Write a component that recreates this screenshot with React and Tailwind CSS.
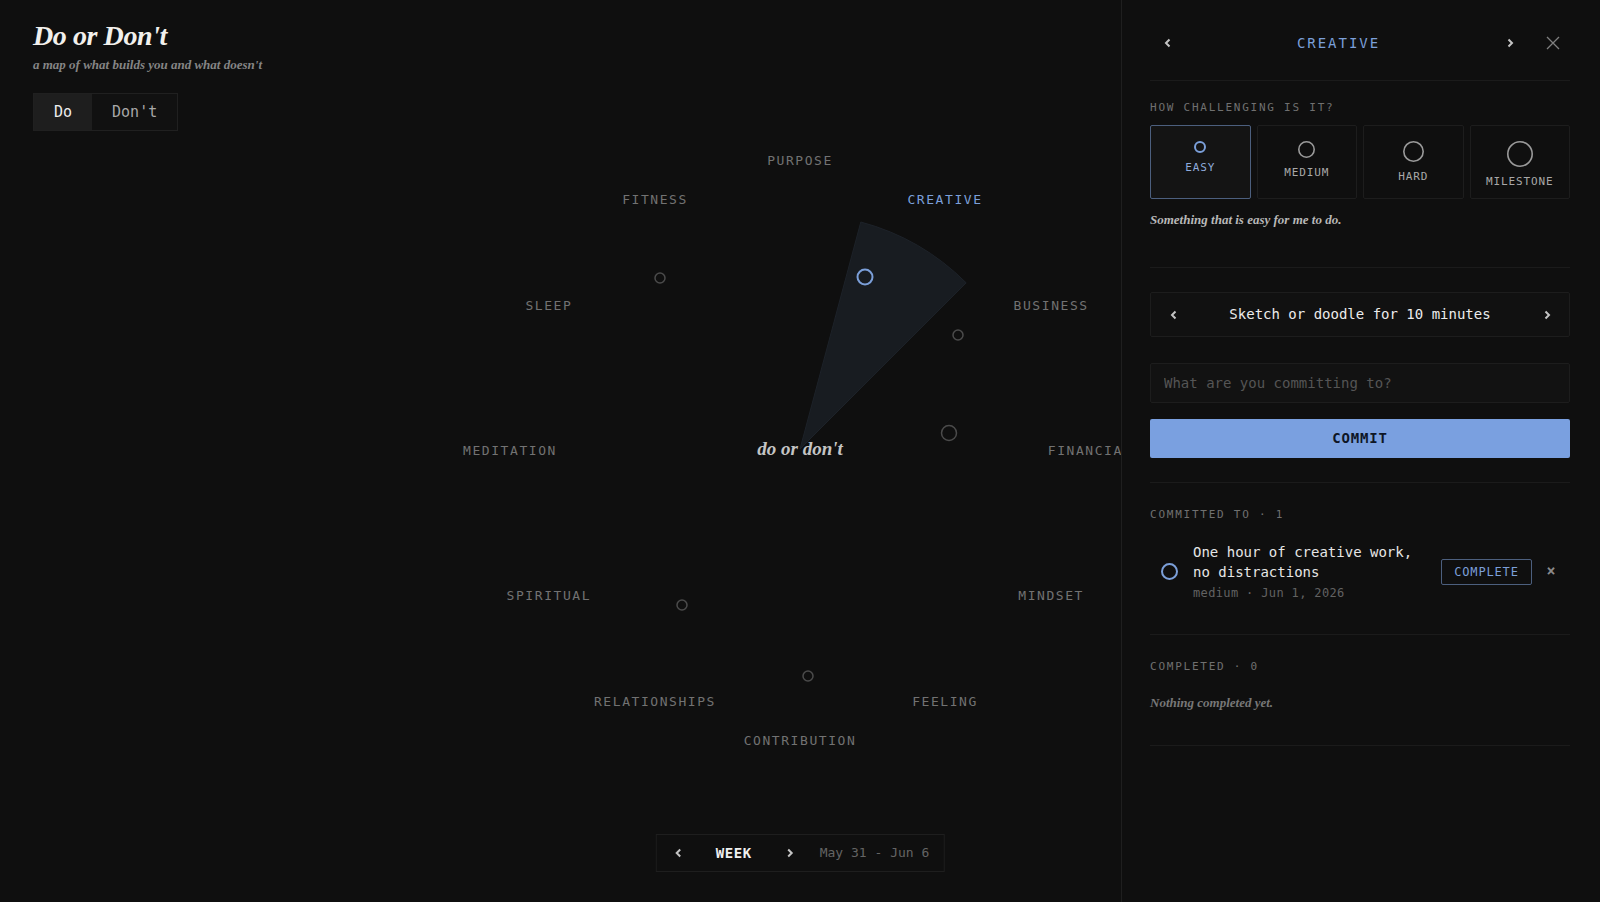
import React, { useState } from "react";

const MONO = "font-['DejaVu_Sans_Mono',monospace]";
const SERIF = "font-['Liberation_Serif',serif]";

const AREAS = [
  "PURPOSE",
  "CREATIVE",
  "BUSINESS",
  "FINANCIAL",
  "MINDSET",
  "FEELING",
  "CONTRIBUTION",
  "RELATIONSHIPS",
  "SPIRITUAL",
  "MEDITATION",
  "SLEEP",
  "FITNESS",
];

// commitment dots, offsets from wheel center
const DOTS = [
  { x: -140, y: -171, r: 5, active: false },
  { x: 65, y: -172, r: 7.5, active: true },
  { x: 158, y: -114, r: 5, active: false },
  { x: 149, y: -16, r: 7.5, active: false },
  { x: -118, y: 156, r: 5, active: false },
  { x: 8, y: 227, r: 5, active: false },
];

const LEVELS = [
  { name: "EASY", size: 12 },
  { name: "MEDIUM", size: 17 },
  { name: "HARD", size: 21 },
  { name: "MILESTONE", size: 26 },
];

function Ring({ size, color, stroke = 1.5 }) {
  const r = (size - stroke) / 2;
  return (
    <svg width={size} height={size} viewBox={`0 0 ${size} ${size}`}>
      <circle cx={size / 2} cy={size / 2} r={r} fill="none" stroke={color} strokeWidth={stroke} />
    </svg>
  );
}

function Chevron({ dir = "left" }) {
  return (
    <svg width="7" height="10" viewBox="0 0 7 10">
      <path
        d={dir === "left" ? "M5.5 1.5 L2 5 L5.5 8.5" : "M1.5 1.5 L5 5 L1.5 8.5"}
        fill="none"
        stroke="#c4c4c4"
        strokeWidth="2"
      />
    </svg>
  );
}

function Wheel({ selected }) {
  const C = 320;
  const R = 290;
  const W = 235;
  const rad = (d) => (d * Math.PI) / 180;
  const a0 = rad(-75);
  const a1 = rad(-45);
  const wedge = `M ${C} ${C} L ${C + W * Math.cos(a0)} ${C + W * Math.sin(a0)} A ${W} ${W} 0 0 1 ${C + W * Math.cos(a1)} ${C + W * Math.sin(a1)} Z`;

  return (
    <div className="absolute left-1/2 top-[449px] h-[640px] w-[640px] -translate-x-1/2 -translate-y-1/2">
      <svg width="640" height="640" viewBox="0 0 640 640" className="absolute inset-0">
        <path d={wedge} fill="#181c21" stroke="#1d2229" strokeWidth="1" />
        {DOTS.map((d, i) => (
          <circle
            key={i}
            cx={C + d.x}
            cy={C + d.y}
            r={d.r}
            fill="none"
            stroke={d.active ? "#7b9fd9" : "#4b4b4b"}
            strokeWidth={d.active ? 2 : 1.5}
          />
        ))}
      </svg>
      {AREAS.map((name, i) => {
        const a = rad(-90 + i * 30);
        return (
          <span
            key={name}
            className={`absolute -translate-x-1/2 -translate-y-1/2 whitespace-nowrap text-[13px] tracking-[0.12em] ${MONO} ${
              name === selected ? "text-[#7b9fd9]" : "text-[#727272]"
            }`}
            style={{ left: C + R * Math.cos(a), top: C + 2 + R * Math.sin(a) }}
          >
            {name}
          </span>
        );
      })}
      <span
        className={`absolute left-1/2 top-1/2 -translate-x-1/2 -translate-y-1/2 whitespace-nowrap text-[19px] font-bold italic text-[#c4c4c4] ${SERIF}`}
      >
        do or don't
      </span>
    </div>
  );
}

function SectionLabel({ children }) {
  return <div className={`text-[11px] leading-[14px] tracking-[0.16em] text-[#707070] ${MONO}`}>{children}</div>;
}

function Sidebar({ area }) {
  const [level, setLevel] = useState("EASY");
  const [text, setText] = useState("");

  return (
    <aside className={`absolute right-0 top-0 z-10 flex h-full w-[479px] flex-col border-l border-[#1f1f1f] bg-[#0f0f0f] pl-[28px] pr-[30px] ${MONO}`}>
      {/* header */}
      <div className="flex h-[81px] items-center border-b border-[#1b1b1b] pt-[6px]">
        <div className="flex flex-1 items-center">
          <button className="flex h-[34px] w-[34px] items-center justify-center">
            <Chevron dir="left" />
          </button>
          <div className="flex-1 text-center text-[14px] tracking-[0.14em] text-[#7b9fd9]">{area}</div>
          <button className="flex h-[34px] w-[34px] items-center justify-center">
            <Chevron dir="right" />
          </button>
        </div>
        <button className="ml-[9px] flex h-[34px] w-[34px] items-center justify-center">
          <svg width="14" height="14" viewBox="0 0 14 14">
            <path d="M1 1 L13 13 M13 1 L1 13" stroke="#808080" strokeWidth="1.3" />
          </svg>
        </button>
      </div>

      {/* difficulty */}
      <div className="border-b border-[#1b1b1b] pb-[38px] pt-[20px]">
        <SectionLabel>HOW CHALLENGING IS IT?</SectionLabel>
        <div className="mt-[10px] grid grid-cols-4 gap-[6px]">
          {LEVELS.map((l) => {
            const on = l.name === level;
            return (
              <button
                key={l.name}
                onClick={() => setLevel(l.name)}
                className={`flex h-[74px] flex-col items-center gap-2 rounded-[2px] border pt-[15px] ${
                  on ? "border-[#4c5f7e] bg-[#141414]" : "border-[#1d1d1d] bg-[#0f0f0f]"
                }`}
              >
                <Ring size={l.size} color={on ? "#7b9fd9" : "#9a9a9a"} stroke={on ? 2 : 1.6} />
                <span className={`text-[11px] leading-[14px] tracking-[0.08em] ${on ? "text-[#8fabdc]" : "text-[#a8a8a8]"}`}>
                  {l.name}
                </span>
              </button>
            );
          })}
        </div>
        <div className={`mt-[12px] text-[13px] font-bold italic leading-[18px] text-[#b8b8b8] ${SERIF}`}>
          Something that is easy for me to do.
        </div>
      </div>

      {/* suggestion + input */}
      <div className="border-b border-[#1b1b1b] pb-[24px] pt-[24px]">
        <div className="flex h-[45px] items-center rounded-[2px] border border-[#1d1d1d] bg-[#111111] px-[14px]">
          <button className="flex w-4 justify-center">
            <Chevron dir="left" />
          </button>
          <div className="flex-1 text-center text-[14px] text-[#ececec]">Sketch or doodle for 10 minutes</div>
          <button className="flex w-4 justify-center">
            <Chevron dir="right" />
          </button>
        </div>
        <input
          value={text}
          onChange={(e) => setText(e.target.value)}
          placeholder="What are you committing to?"
          className="mt-[26px] block h-[40px] w-full rounded-[2px] border border-[#1d1d1d] bg-[#121212] px-[13px] text-[14px] text-[#e5e5e5] outline-none placeholder:text-[#555555]"
        />
        <button className="mt-[16px] flex h-[39px] w-full items-center justify-center rounded-[2px] bg-[#7aa0e0] text-[14px] font-bold tracking-[0.06em] text-[#0e1626]">
          COMMIT
        </button>
      </div>

      {/* committed */}
      <div className="border-b border-[#1b1b1b] pb-[33px] pt-[25px]">
        <SectionLabel>COMMITTED TO · 1</SectionLabel>
        <div className="mt-[20px] flex items-center pl-[11px] pr-[10px]">
          <Ring size={17} color="#7b9fd9" stroke={2} />
          <div className="ml-[15px] w-[232px]">
            <div className="text-[14px] leading-[20px] text-[#e6e6e6]">One hour of creative work, no distractions</div>
            <div className="mt-[3px] text-[12px] leading-[16px] tracking-[0.03em] text-[#626262]">medium · Jun 1, 2026</div>
          </div>
          <button className="ml-auto flex h-[26px] w-[91px] items-center justify-center rounded-[2px] border border-[#4c5f7e] text-[12px] tracking-[0.07em] text-[#7b9fd9]">
            COMPLETE
          </button>
          <button className="ml-[10px] flex w-[18px] items-center justify-center text-[15px] font-bold text-[#8a8a8a]">×</button>
        </div>
      </div>

      {/* completed */}
      <div className="border-b border-[#1b1b1b] pb-[33px] pt-[25px]">
        <SectionLabel>COMPLETED · 0</SectionLabel>
        <div className={`mt-[20px] text-[13px] font-bold italic leading-[18px] text-[#777777] ${SERIF}`}>Nothing completed yet.</div>
      </div>
    </aside>
  );
}

export default function App() {
  const [mode, setMode] = useState("do");
  const area = "CREATIVE";

  return (
    <div className="relative h-[902px] w-full overflow-hidden bg-[#0f0f0f]">
      <header className="relative z-[1] pl-[33px] pt-[20px]">
        <h1 className={`text-[28px] font-bold italic leading-[32px] tracking-[-0.015em] text-[#f2f0ec] ${SERIF}`}>Do or Don't</h1>
        <p className={`mt-[4px] text-[13px] font-bold italic leading-[17px] text-[#858585] ${SERIF}`}>
          a map of what builds you and what doesn't
        </p>
        <div className={`mt-[20px] inline-flex h-[38px] border border-[#202020] ${MONO}`}>
          <button
            onClick={() => setMode("do")}
            className={`px-5 text-[15px] ${mode === "do" ? "bg-[#1e1e1e] text-[#ededed]" : "bg-[#111111] text-[#a8a8a8]"}`}
          >
            Do
          </button>
          <button
            onClick={() => setMode("dont")}
            className={`px-5 text-[15px] ${mode === "dont" ? "bg-[#1e1e1e] text-[#ededed]" : "bg-[#111111] text-[#a8a8a8]"}`}
          >
            Don't
          </button>
        </div>
      </header>

      <Wheel selected={area} />

      <div className={`absolute bottom-[30px] left-1/2 flex h-[38px] -translate-x-1/2 items-center border border-[#1e1e1e] bg-[#0f0f0f] pl-[13px] pr-[14px] ${MONO}`}>
        <button className="flex w-4 justify-center">
          <Chevron dir="left" />
        </button>
        <div className="mx-2 w-[80px] text-center text-[14px] font-bold tracking-[0.04em] text-[#f0f0f0]">WEEK</div>
        <button className="flex w-4 justify-center">
          <Chevron dir="right" />
        </button>
        <div className="ml-[22px] text-[13px] text-[#646464]">May 31 - Jun 6</div>
      </div>

      <Sidebar area={area} />
    </div>
  );
}
